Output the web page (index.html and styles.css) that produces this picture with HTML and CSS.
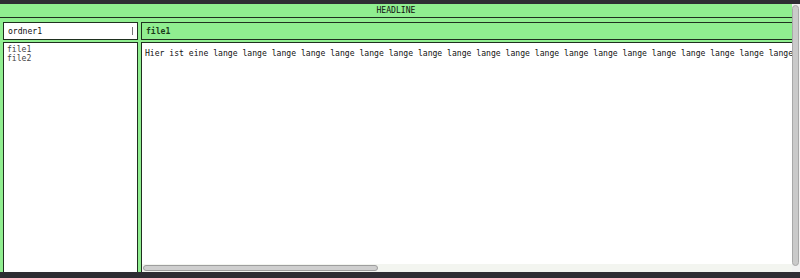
FILE: index.html
```html
<!DOCTYPE html>
<html lang="de">
<head>
    <meta charset="UTF-8">
    <meta name="viewport" content="width=device-width, initial-scale=1.0">
    <title>Dateibrowser</title>
    <link rel="stylesheet" href="styles.css">
</head>
<body>
    <div class="app">
        <div class="page">
            <div class="headline">HEADLINE</div>
            <div class="main">
                <div class="side">
                    <div class="folder">
                        <span>ordner1</span>
                        <span class="handle"></span>
                    </div>
                    <ul class="files">
                        <li>file1</li>
                        <li>file2</li>
                    </ul>
                </div>
                <div class="viewer">
                    <div class="tab">file1</div>
                    <div class="content">
                        <div class="text">Hier ist eine lange lange lange lange lange lange lange lange lange lange lange lange lange lange lange lange lange lange lange lange lange lange lange lange Zeile.</div>
                        <div class="hscroll"><div class="hthumb"></div></div>
                    </div>
                </div>
            </div>
        </div>
        <div class="vscroll"><div class="vthumb"></div></div>
    </div>
</body>
</html>
```

FILE: styles.css
```css
body {
    margin: 0;
    height: 278px;
    overflow: hidden;
    background-color: #2e2d33;
    font-family: "DejaVu Sans Mono", monospace;
    font-size: 8.1px;
    color: #111;
}
.app {
    margin-top: 4px;
    height: 268px;
    display: flex;
    background-color: #90ee90;
}
.page {
    flex: 1;
    min-width: 0;
    overflow: hidden;
}
.vscroll {
    width: 8px;
    flex: none;
    background: #f1f1f1;
    padding: 1px 1px 6px 0;
    box-sizing: border-box;
    display: flex;
}
.vthumb {
    flex: 1;
    background: #cacaca;
    border: 1px solid #a8a8a8;
    border-radius: 4px;
}
.headline {
    height: 13px;
    line-height: 13px;
    text-align: center;
    border-bottom: 1px solid #1f2f1f;
}
.main {
    display: flex;
    gap: 3px;
    padding: 4px 0 0 3px;
    height: 254px;
}
.side {
    width: 135px;
    flex: none;
    display: flex;
    flex-direction: column;
    gap: 2px;
}
.folder {
    height: 18px;
    box-sizing: border-box;
    border: 1px solid #1f2f1f;
    background: #fff;
    display: flex;
    align-items: center;
    justify-content: space-between;
    padding: 0 4px;
}
.handle {
    width: 0;
    height: 8px;
    border-left: 1px solid #777;
}
.files {
    flex: 1;
    margin: 0;
    list-style: none;
    border: 1px solid #1f2f1f;
    background: #fff;
    padding: 2px 3px;
    color: #444;
    line-height: 9px;
}
.viewer {
    width: 700px;
    flex: none;
    display: flex;
    flex-direction: column;
    gap: 2px;
}
.tab {
    height: 18px;
    box-sizing: border-box;
    border: 1px solid #1f2f1f;
    border-right: none;
    padding: 0 4px;
    line-height: 16px;
    font-weight: bold;
    color: #1b3a1b;
}
.content {
    flex: 1;
    margin-bottom: 2px;
    background: #fff;
    border-left: 1px solid #1f2f1f;
    border-top: 1px solid #1f2f1f;
    border-bottom: 2px solid #6ccf6c;
    display: flex;
    flex-direction: column;
}
.text {
    flex: 1;
    padding: 5px 3px;
    white-space: nowrap;
    overflow: hidden;
}
.hscroll {
    height: 8px;
    background: #f3f5f0;
    padding: 1px 1px;
    box-sizing: border-box;
}
.hthumb {
    width: 235px;
    height: 100%;
    box-sizing: border-box;
    background: #cfcfcf;
    border: 1px solid #9e9e9e;
    border-radius: 4px;
}
```
